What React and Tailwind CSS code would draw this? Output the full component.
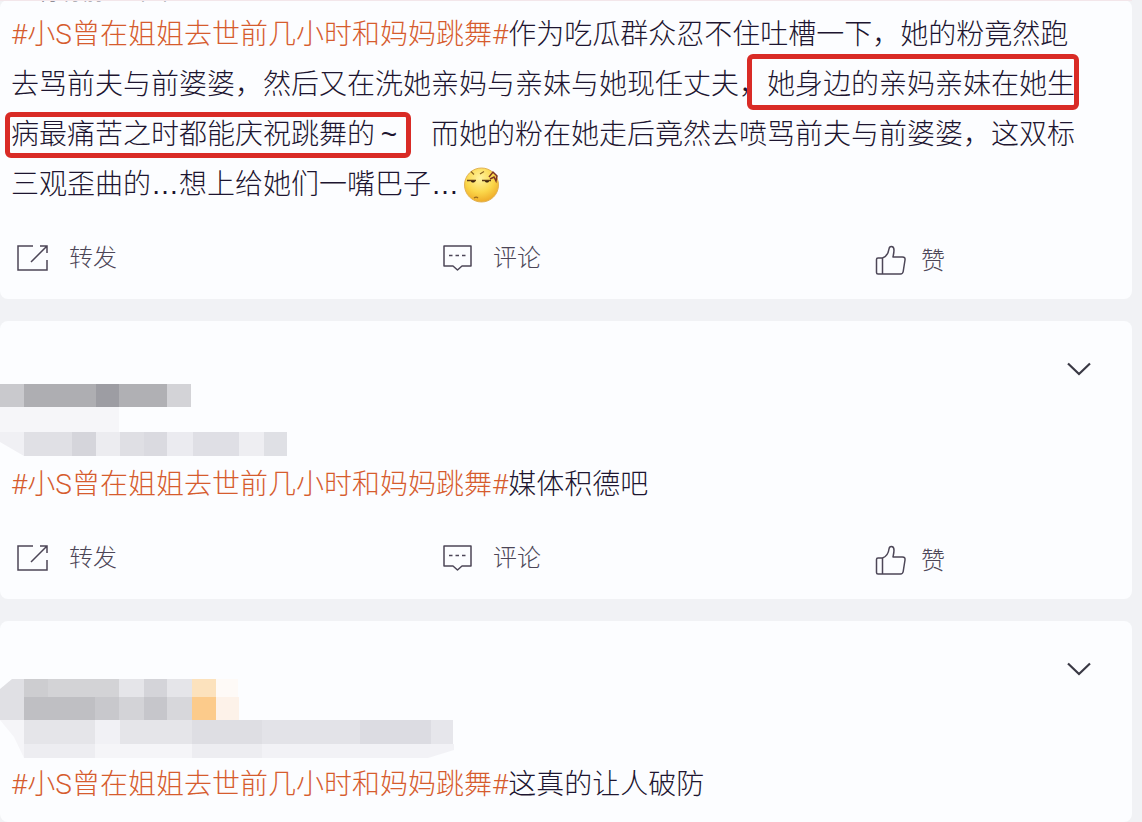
import React from 'react';

const TOPIC = '#小S曾在姐姐去世前几小时和妈妈跳舞#';

// ─── Icons ─────────────────────────────────────────────────────────
function ForwardIcon() {
  return (
    <svg aria-hidden="true" width="32" height="28" viewBox="0 0 32 28" fill="none" stroke="currentColor" strokeWidth="1.5">
      <path d="M16 2H1v24h29V16" />
      <path d="M14 18 29.500 2.500M23 2h7v7" />
    </svg>
  );
}

function CommentIcon() {
  return (
    <svg aria-hidden="true" width="30" height="28" viewBox="0 0 30 28" fill="none" stroke="currentColor" strokeWidth="1.5">
      <path d="M1 2h27v20h-9l-4.500 4-4.500-4H1z" strokeLinejoin="round" />
      <path d="M6 11.500h3.500M12.500 11.500H16M19 11.500h3.500" />
    </svg>
  );
}

function LikeIcon() {
  return (
    <svg aria-hidden="true" width="32" height="32" viewBox="0 0 32 32" fill="none" stroke="currentColor" strokeWidth="1.500" strokeLinejoin="round">
      <path d="M7.500 13v16M1.500 14.500c0-1 .5-1.500 1.500-1.500h4.500c4-1.500 6-5 6.500-9 .2-1.500 1-2.500 2.300-2.500 1.800 0 2.700 1.500 2.700 3.500 0 2.500-.5 4.500-1 7h9.500c2 0 2.800 1 2.500 3l-1.800 11.500c-.3 1.700-1.200 2.500-2.700 2.500H3c-1 0-1.500-.5-1.500-1.500z" />
    </svg>
  );
}

function ChevronIcon() {
  return (
    <svg aria-hidden="true" width="26" height="16" viewBox="0 0 26 16" fill="none" stroke="currentColor" strokeWidth="2.200">
      <path d="M2 2.500 13 13 24 2.500" />
    </svg>
  );
}

function SmirkEmoji() {
  return (
    <svg role="img" aria-label="表情" className="mb-1 ml-1 inline-block align-middle" width="38" height="38" viewBox="0 0 38 38" fill="none">
      <defs>
        <radialGradient id="face" cx="0.45" cy="0.3" r="0.75">
          <stop offset="0" stopColor="#fff3a0" />
          <stop offset="0.55" stopColor="#fbd74a" />
          <stop offset="1" stopColor="#eda423" />
        </radialGradient>
      </defs>
      <circle cx="18.500" cy="19" r="17" fill="url(#face)" stroke="#e2b254" />
      <path d="M8 5.500l3 3M17 8l4-2.500" stroke="#8a6420" strokeWidth="1.200" />
      <path d="M4 14.500h9M19 14.500h9" stroke="#5d3a14" strokeWidth="1.400" />
      <path d="M8 15h4c0 2-4 2-4 0zM22 15h4c0 2-4 2-4 0z" fill="#3d2410" />
      <path d="M26 11l4-5 4 4-1 5-2-4-4 2" stroke="#7d3524" strokeWidth="1.500" />
      <path d="M11 32c2-1.500 3-1 4 0" stroke="#9a6a1c" strokeWidth="1.300" />
    </svg>
  );
}

// ─── Pixelated author blocks: [x, y, width, height, colour] ────────
const MOSAIC_A = [
  [0, 63, 24, 23, '#c9c9cd'],
  [24, 63, 72, 23, '#aeaeb2'],
  [96, 63, 23, 23, '#9d9da3'],
  [119, 63, 48, 23, '#b0b0b4'],
  [167, 63, 24, 23, '#d3d3d7'],
  [0, 86, 119, 25, '#f6f6f9'],
  [24, 111, 48, 24, '#e0e0e5'],
  [72, 111, 24, 24, '#d5d5db'],
  [96, 111, 24, 24, '#ececf0'],
  [120, 111, 24, 24, '#dfdfe4'],
  [144, 111, 23, 24, '#dadae0'],
  [167, 111, 26, 24, '#ebebf0'],
  [193, 111, 46, 24, '#dfdfe5'],
  [239, 111, 25, 24, '#eeeef2'],
  [264, 111, 23, 24, '#dfe0e5'],
];

const MOSAIC_B = [
  [24, 58, 24, 18, '#cdcdd0'],
  [48, 58, 71, 18, '#d3d3d6'],
  [119, 58, 25, 18, '#e5e5e9'],
  [144, 58, 23, 18, '#d4d4d9'],
  [167, 58, 25, 18, '#e5e5e9'],
  [192, 58, 24, 18, '#fce2bd'],
  [216, 58, 22, 18, '#fefaf7'],
  [24, 76, 71, 23, '#bfbfc3'],
  [95, 76, 24, 23, '#c8c8cc'],
  [119, 76, 25, 23, '#d3d3d7'],
  [144, 76, 23, 23, '#c6c6cb'],
  [167, 76, 25, 23, '#d7d7db'],
  [192, 76, 24, 23, '#fccb8b'],
  [216, 76, 23, 23, '#fdf2e9'],
  [24, 99, 71, 24, '#e5e5e9'],
  [95, 99, 25, 24, '#f1f1f5'],
  [120, 99, 72, 24, '#e5e5e9'],
  [192, 99, 70, 24, '#dedee3'],
  [262, 99, 98, 24, '#e3e3e8'],
  [360, 99, 71, 24, '#dcdce2'],
  [431, 99, 22, 24, '#e6e6eb'],
  [24, 123, 71, 14, '#ededf1'],
  [95, 123, 97, 14, '#f5f5f8'],
  [192, 123, 70, 14, '#ededf1'],
];

function Mosaic({ blocks, children }) {
  return (
    <svg aria-hidden="true" className="shrink-0" width="460" height="139" viewBox="0 0 460 139">
      {children}
      {blocks.map(([x, y, w, h, fill]) => (
        <rect key={`${x}-${y}`} x={x} y={y} width={w} height={h} fill={fill} shapeRendering="crispEdges" />
      ))}
    </svg>
  );
}

// ─── Post pieces ───────────────────────────────────────────────────
function Card({ children }) {
  return <article className="shrink-0 rounded-lg bg-[#fcfdff] last:grow">{children}</article>;
}

function PostHeader({ children }) {
  return (
    <header className="flex items-start justify-between pr-10">
      {children}
      <button type="button" aria-label="更多" className="mt-10 text-[#3a3945]">
        <ChevronIcon />
      </button>
    </header>
  );
}

function PostText({ children }) {
  return (
    <p className="pr-10 pl-[11px] text-[28px] leading-[50px] font-light text-[#1d1530]">
      <a href="#topic" className="font-['Roboto','Noto_Sans_CJK_SC',sans-serif] text-[#d65c2e]">{TOPIC}</a>
      {children}
    </p>
  );
}

function Actions() {
  return (
    <footer className="grid h-[89px] grid-cols-[426fr_432fr_257fr] items-center pt-2 pl-[17px] text-2xl font-light text-[#4c4657]">
      <button type="button" className="flex items-center gap-5 pb-px">
        <ForwardIcon />
        转发
      </button>
      <button type="button" className="flex items-center gap-5 pb-px">
        <CommentIcon />
        评论
      </button>
      <button type="button" className="flex items-center gap-3.5 pt-1">
        <LikeIcon />
        赞
      </button>
    </footer>
  );
}

export default function App() {
  return (
    <main
      lang="zh-CN"
      className="flex h-screen flex-col gap-[22px] overflow-hidden bg-[#f1f2f5] pr-[10px] font-['Liberation_Sans','Noto_Sans_CJK_SC',sans-serif]"
    >
      <Card>
        {/* tail of the meta line, scrolled past the top edge */}
        <div className="flex h-[10px] items-end gap-7 overflow-hidden border-t border-[#f3e6ea] pb-1 pl-[38px] text-[22px] leading-7 text-[#77757f]">
          <span>行有前</span>
          <span>平平血血</span>
        </div>
        <PostText>
          作为吃瓜群众忍不住吐槽一下，她的粉竟然跑去骂前夫与前婆婆，然后又在洗她亲妈与亲妹与她现任丈夫，
          <mark className="relative inline-block bg-transparent text-inherit">
            她身边的亲妈亲妹在她生
            <span className="absolute -top-1.5 -right-1 bottom-0 -left-5 rounded-md border-[5px] border-[#d92b26]" />
          </mark>
          <mark className="relative inline-block bg-transparent text-inherit">
            病最痛苦之时都能庆祝跳舞的
            <span className="inline-block w-7 text-center">~</span>
            <span className="absolute top-0.5 -right-2 bottom-0.5 -left-1.5 rounded-md border-[5px] border-[#d92b26]" />
          </mark>
          {'\u3000'}而她的粉在她走后竟然去喷骂前夫与前婆婆，这双标三观歪曲的…想上给她们一嘴巴子…
          <SmirkEmoji />
        </PostText>
        <Actions />
      </Card>

      <Card>
        <PostHeader>
          <Mosaic blocks={MOSAIC_A}>
            <path d="M0 111h24v24L0 121z" fill="#f0f0f4" />
          </Mosaic>
        </PostHeader>
        <PostText>媒体积德吧</PostText>
        <Actions />
      </Card>

      <Card>
        <PostHeader>
          <Mosaic blocks={MOSAIC_B}>
            <path d="M24 58H12L0 68v31h24z" fill="#e0e0e4" />
            <path d="M0 99h24v38L14 116z" fill="#f5f5f8" />
            <path d="M262 123h192v6l-26 8H262z" fill="#f2f2f6" />
          </Mosaic>
        </PostHeader>
        <PostText>这真的让人破防</PostText>
      </Card>
    </main>
  );
}
